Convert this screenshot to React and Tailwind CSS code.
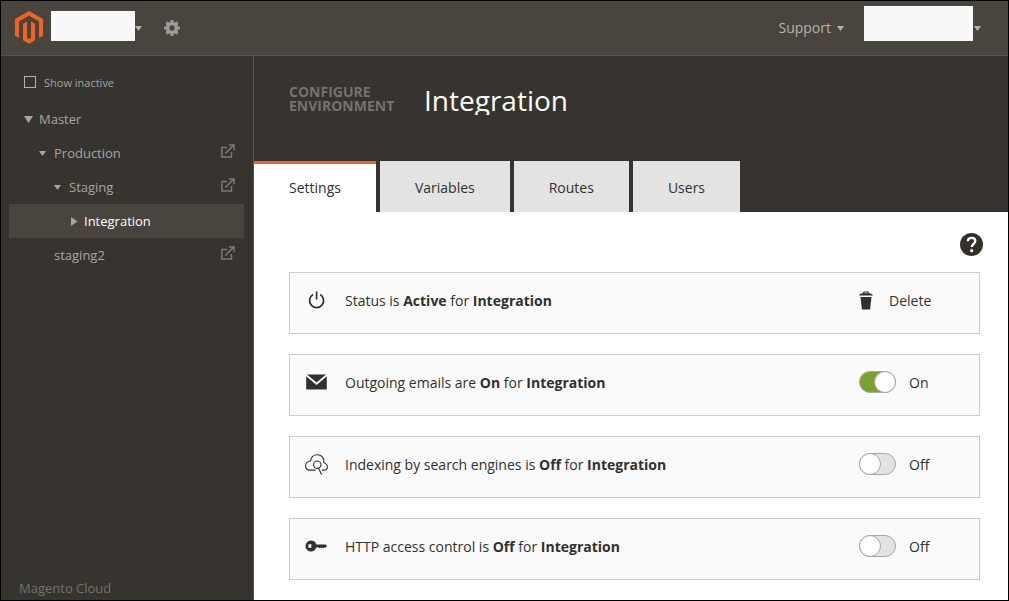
import { useState } from "react";

function Logo() {
  return (
    <svg width="28" height="33" viewBox="0 0 28 33" fill="#f26322" aria-hidden="true">
      <path d="M14 0 0 8v16.7L4 27V10.4l10-5.8 10 5.8V27l4-2.3V8z" />
      <path d="M16 27.1l-2 1.2-2-1.2V10.4l-4 2.3v16.6l6 3.5 6-3.5V12.7l-4-2.3z" />
    </svg>
  );
}

function CaretDown({ size = 7 }) {
  return (
    <svg width={size} height={size - 2} viewBox="0 0 7 5" preserveAspectRatio="none" fill="currentColor" className="shrink-0" aria-hidden="true">
      <path d="M0 0h7L3.5 5z" />
    </svg>
  );
}

function CaretRight() {
  return (
    <svg width="7" height="9" viewBox="0 0 7 9" fill="currentColor" className="shrink-0" aria-hidden="true">
      <path d="M0 0l6.5 4.5L0 9z" />
    </svg>
  );
}

function Gear() {
  return (
    <svg width="16" height="16" viewBox="0 0 16 16" fill="currentColor" aria-hidden="true">
      <path fillRule="evenodd" d="M8 1.900a6.100 6.100 0 1 0 0 12.200A6.100 6.100 0 0 0 8 1.900zm0 3.400a2.700 2.700 0 1 1 0 5.400 2.700 2.700 0 0 1 0-5.400z" />
      {[0, 45, 90, 135, 180, 225, 270, 315].map((a) => (
        <path key={a} d="M6.700 0h2.600l.7 3H6z" transform={`rotate(${a} 8 8)`} />
      ))}
    </svg>
  );
}

function External() {
  return (
    <svg width="14" height="14" viewBox="0 0 14 14" fill="none" stroke="currentColor" strokeWidth="1.500" aria-hidden="true">
      <path d="M6 3.500H.9v9.600h9.600V8" />
      <path d="M4.300 9.500l8.400-8.400" />
      <path d="M8 .9h5.100v5.300" />
    </svg>
  );
}

function Power() {
  return (
    <svg width="23" height="20" viewBox="0 0 23 20" fill="none" stroke="currentColor" strokeWidth="1.700" aria-hidden="true">
      <path d="M8 4.600a7 7 0 1 0 7.200 0" />
      <path d="M11.600 1.500v8" />
    </svg>
  );
}

function Mail() {
  return (
    <svg width="23" height="20" viewBox="0 0 23 20" fill="currentColor" aria-hidden="true">
      <path d="M2 2.500h19L11.500 10.500z" />
      <path d="M1.200 4.200l10.300 8.700 10.300-8.700v13.200H1.200z" />
    </svg>
  );
}

function CloudSearch() {
  return (
    <svg width="23" height="21" viewBox="0 0 23 21" fill="none" stroke="currentColor" strokeWidth="1.100" strokeLinecap="round" aria-hidden="true">
      <path d="M10.200 16.100H5.100C2.400 16.100.6 14.200.6 11.700c0-2.600 2-4.800 5-4.700C6.100 3.200 8.700.8 12.300.8c3.800 0 6.700 2.800 6.500 6.600-.1.700-.1 1-.1 1.300 2.300.6 3.700 2 3.700 4.100 0 1.900-1.300 3.300-3.200 3.300h-2" />
      <circle cx="12.300" cy="10.700" r="3.700" />
      <path d="M13.600 14.300l2.800 5.900" />
    </svg>
  );
}

function Key() {
  return (
    <svg width="23" height="20" viewBox="0 0 23 20" fill="currentColor" aria-hidden="true">
      <path fillRule="evenodd" d="M6.100 4.500a5.500 5.500 0 0 1 5.200 3.900h9.400l1.300 1.500-1.200 1.500-1.400.1-.8.800-1-.8-.9.800-.9-.8-1.100.8-1-.8h-2.400A5.500 5.500 0 1 1 6.100 4.500zM3.400 8.300v3.400h3V8.300z" />
    </svg>
  );
}

function Trash() {
  return (
    <svg width="14" height="19" viewBox="0 0 14 19" fill="currentColor" aria-hidden="true">
      <path fillRule="evenodd" d="M4 2.300 4.500.5h5l.5 1.800c2.300.2 3.800.9 3.800 2.200H.2C.2 3.200 1.700 2.500 4 2.300zM5.200 2.200h3.600l-.3-.8h-3z" />
      <path d="M1.500 6h11l-1.400 12.500H2.900z" />
    </svg>
  );
}

function Help() {
  return (
    <svg width="23" height="23" viewBox="0 0 23 23" aria-hidden="true">
      <circle cx="11.500" cy="11.500" r="11.500" fill="#33302a" />
      <path d="M7.800 8.300c.1-2.200 1.600-3.500 3.800-3.500 2.200 0 3.700 1.300 3.700 3.200 0 2.700-3.500 3.100-3.500 6.100" fill="none" stroke="#fff" strokeWidth="2.300" />
      <circle cx="11.700" cy="17.700" r="1.600" fill="#fff" />
    </svg>
  );
}

const tree = [
  { name: "Master", indent: "pl-[15px]", caret: "master" },
  { name: "Production", indent: "pl-[30px]", caret: "down", link: true },
  { name: "Staging", indent: "pl-[45px]", caret: "down", link: true },
  { name: "Integration", indent: "pl-[60px]", caret: "right", active: true },
  { name: "staging2", indent: "pl-[30px]", link: true },
];

const tabs = ["Settings", "Variables", "Routes", "Users"];

function TreeItem({ item }) {
  return (
    <li className={`flex h-[34px] items-center justify-between pr-[9px] ${item.indent} ${item.active ? "bg-[#49443d] text-white" : ""}`}>
      <a href="#env" className="flex items-center">
        <span className="flex w-[15px] items-center text-[#a8a5a1]">
          {item.caret === "master" && <CaretDown size={9} />}
          {item.caret === "down" && <CaretDown />}
          {item.caret === "right" && <span className="ml-[2px]"><CaretRight /></span>}
        </span>
        {item.name}
      </a>
      {item.link && (
        <a href="#open" aria-label={`Open ${item.name}`} className="mb-1 text-[#7d7a76]">
          <External />
        </a>
      )}
    </li>
  );
}

function Card({ icon, children, action }) {
  return (
    <section className="flex h-[62px] items-center border border-[#cacaca] bg-[#fafafa] pb-1 pl-[15px]">
      <span className="flex w-10 shrink-0 pb-[2px]">{icon}</span>
      <p className="flex-1">{children}</p>
      <div className="w-[120px] shrink-0">{action}</div>
    </section>
  );
}

function Toggle({ label, initial }) {
  const [on, setOn] = useState(initial);
  return (
    <label className="flex items-center gap-[13px]">
      <input
        type="checkbox"
        role="switch"
        aria-label={label}
        checked={on}
        onChange={(e) => setOn(e.target.checked)}
        className="mb-[2px] flex h-[22px] w-[37px] appearance-none rounded-full border border-[#aaa6a0] bg-[#e3e3e3] before:-my-px before:-ml-px before:size-[22px] before:rounded-full before:border before:border-[#aaa6a0] before:bg-white before:content-[''] checked:justify-end checked:bg-[#79a22e] checked:before:-mr-px checked:before:ml-0"
      />
      {on ? "On" : "Off"}
    </label>
  );
}

export default function App() {
  const [tab, setTab] = useState("Settings");
  return (
    <div className="flex min-h-screen flex-col border border-black bg-white font-['Open_Sans','Noto_Sans',sans-serif] text-sm text-[#303030]">
      <header className="flex h-[55px] items-center justify-between border-b border-[#59544e] bg-[#49443d] pl-[14px] pr-[27px] text-[#b5b2ae]">
        <div className="flex items-center">
          <a href="#home" aria-label="Magento" className="pb-[2px]"><Logo /></a>
          <button type="button" aria-label="Project" className="ml-2 flex items-center">
            <span className="mb-1 h-[30px] w-[84px] bg-[#f8f8f8]" />
            <CaretDown />
          </button>
          <button type="button" aria-label="Configure project" className="ml-[22px] text-[#9e9b98]"><Gear /></button>
        </div>
        <div className="flex items-center">
          <button type="button" className="flex items-center gap-[6px]">Support <CaretDown /></button>
          <button type="button" aria-label="Account" className="ml-5 flex items-center gap-px">
            <span className="mb-[10px] h-[35px] w-[109px] bg-[#f8f8f8]" />
            <CaretDown />
          </button>
        </div>
      </header>

      <div className="flex flex-1">
        <aside className="flex w-[253px] shrink-0 flex-col border-r border-[#59544e] bg-[#37332e] text-[13px] text-[#a8a5a1]">
          <label className="mt-5 flex items-center gap-2 pl-[23px] text-[11px] leading-[14px]">
            <input type="checkbox" className="mb-[2px] size-3 appearance-none border border-[#b5b2ae] checked:bg-[#b5b2ae]" />
            Show inactive
          </label>
          <nav className="mt-3 pl-2 pr-[9px]">
            <ul>
              {tree.map((item) => <TreeItem key={item.name} item={item} />)}
            </ul>
          </nav>
          <footer className="mt-auto pb-[3px] pl-[18px] leading-[18px] text-[#75726e]">Magento Cloud</footer>
        </aside>

        <main className="min-w-0 flex-1">
          <div className="flex h-[156px] flex-col justify-between bg-[#37332e] pt-[29px]">
            <div className="flex items-start gap-[30px] pl-[35px]">
              <p className="w-[105px] text-sm leading-[14px] font-bold text-[#75726e] uppercase">Configure Environment</p>
              <h1 className="overflow-hidden text-[28px] leading-[30px] text-white">Integration</h1>
            </div>
            <div role="tablist" className="flex gap-1">
              {tabs.map((name) => (
                <button
                  key={name}
                  type="button"
                  role="tab"
                  aria-selected={tab === name}
                  onClick={() => setTab(name)}
                  className={`h-[51px] border-t-3 px-[35px] ${tab === name ? "border-[#f26322] bg-white" : "border-[#e3e3e3] bg-[#e3e3e3]"}`}
                >
                  {name}
                </button>
              ))}
            </div>
          </div>

          <div className="pt-5 pr-7 pb-5 pl-[35px]">
            <div className="-mr-[3px] flex h-6 items-center justify-end">
              <button type="button" aria-label="Help"><Help /></button>
            </div>
            <div className="mt-4 flex flex-col gap-5">
              <Card
                icon={<Power />}
                action={<button type="button" className="flex items-center gap-4"><span className="pb-[2px]"><Trash /></span>Delete</button>}
              >
                Status is <b>Active</b> for <b>Integration</b>
              </Card>
              <Card icon={<Mail />} action={<Toggle label="Outgoing emails" initial={true} />}>
                Outgoing emails are <b>On</b> for <b>Integration</b>
              </Card>
              <Card icon={<CloudSearch />} action={<Toggle label="Indexing by search engines" initial={false} />}>
                Indexing by search engines is <b>Off</b> for <b>Integration</b>
              </Card>
              <Card icon={<Key />} action={<Toggle label="HTTP access control" initial={false} />}>
                HTTP access control is <b>Off</b> for <b>Integration</b>
              </Card>
            </div>
          </div>
        </main>
      </div>
    </div>
  );
}
